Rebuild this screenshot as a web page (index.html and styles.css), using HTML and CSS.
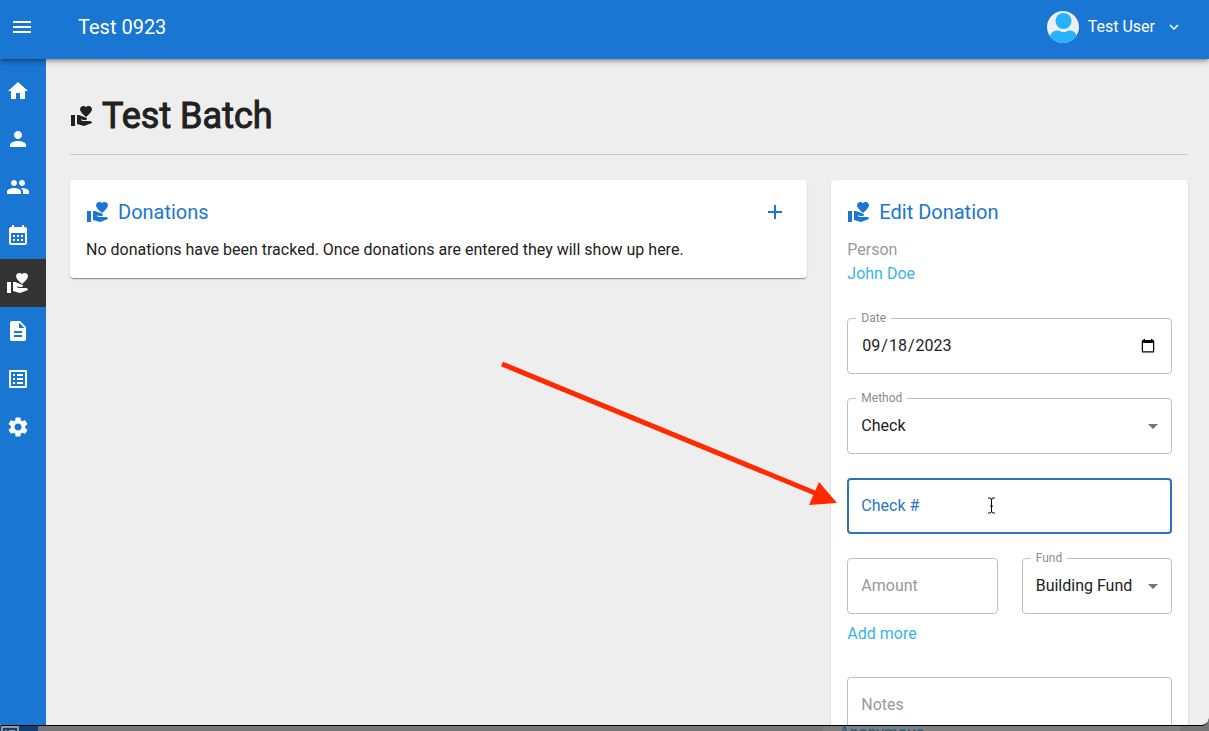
FILE: index.html
```
<!DOCTYPE html>
<html lang="en">
<head>
<meta charset="utf-8">
<title>Test Batch</title>
<link rel="stylesheet" href="styles.css">
</head>
<body>
<svg class="sprite" aria-hidden="true">
  <symbol id="giving" viewBox="0 0 24 24"><path d="M1 11h4v11H1zm15-7.75C16.65 2.49 17.66 2 18.7 2 20.55 2 22 3.45 22 5.3c0 2.27-2.91 4.9-6 7.7-3.09-2.81-6-5.44-6-7.7C10 3.45 11.45 2 13.3 2c1.04 0 2.05.49 2.7 1.25zM20 17h-7l-2.09-.73.33-.94L13 16h2.82c.65 0 1.18-.53 1.18-1.18 0-.49-.31-.93-.77-1.11L8.97 11H7v9.02L14 22l8.01-3c-.01-1.1-.9-2-2.01-2z"/></symbol>
  <symbol id="list" viewBox="0 0 24 24"><path d="M19 5v14H5V5h14m1.1-2H3.9c-.5 0-.9.4-.9.9v16.2c0 .4.4.9.9.9h16.2c.4 0 .9-.5.9-.9V3.9c0-.5-.5-.9-.9-.9zM11 7h6v2h-6V7zm0 4h6v2h-6v-2zm0 4h6v2h-6zM7 7h2v2H7zm0 4h2v2H7zm0 4h2v2H7z"/></symbol>
</svg>

<div class="window">
  <header class="topbar">
    <button class="icon-button" type="button" aria-label="Menu">
      <svg class="icon" viewBox="0 0 24 24"><path d="M3 18h18v-2H3zm0-5h18v-2H3zm0-7v2h18V6z"/></svg>
    </button>
    <div class="site-name">Test 0923</div>
    <button class="user-menu" type="button">
      <svg class="avatar" viewBox="0 0 32 32" aria-hidden="true">
        <clipPath id="disc"><circle cx="16" cy="16" r="16"/></clipPath>
        <g clip-path="url(#disc)">
          <rect width="32" height="32" fill="#eeeeee"/>
          <circle cx="16.500" cy="10" r="8" fill="#25b2fb"/>
          <path d="M1 32c1-9 5-12.500 9-12.500 3 0 3 1.500 6.500 1.500s3.500-1.500 6.500-1.500c4 0 8 3.500 8.500 12.500z" fill="#25b2fb"/>
        </g>
      </svg>
      <span>Test User</span>
      <svg class="chevron" viewBox="0 0 24 24" aria-hidden="true"><path d="M7.410 8.590 12 13.170l4.590-4.580L18 10l-6 6-6-6z"/></svg>
    </button>
  </header>

  <div class="body">
    <nav class="sidebar" aria-label="Main">
      <a href="#home" aria-label="Home"><svg class="icon" viewBox="0 0 24 24"><path d="M10 20v-6h4v6h5v-8h3L12 3 2 12h3v8z"/></svg></a>
      <a href="#person" aria-label="Person"><svg class="icon" viewBox="0 0 24 24"><path d="M12 12c2.21 0 4-1.79 4-4s-1.79-4-4-4-4 1.79-4 4 1.79 4 4 4m0 2c-2.67 0-8 1.34-8 4v2h16v-2c0-2.66-5.33-4-8-4"/></svg></a>
      <a href="#groups" aria-label="Groups"><svg class="icon" viewBox="0 0 24 24"><path d="M16 11c1.660 0 2.990-1.340 2.990-3S17.660 5 16 5s-3 1.340-3 3 1.340 3 3 3m-8 0c1.660 0 2.990-1.340 2.990-3S9.660 5 8 5 5 6.340 5 8s1.340 3 3 3m0 2c-2.330 0-7 1.170-7 3.500V19h14v-2.500c0-2.330-4.670-3.500-7-3.500m8 0c-.29 0-.62.02-.97.05 1.160.84 1.970 1.970 1.970 3.450V19h6v-2.500c0-2.330-4.670-3.500-7-3.500"/></svg></a>
      <a href="#calendar" aria-label="Calendar"><svg class="icon" viewBox="0 0 24 24"><path d="M19 4h-1V2h-2v2H8V2H6v2H5c-1.110 0-1.990.9-1.990 2L3 20c0 1.100.89 2 2 2h14c1.100 0 2-.9 2-2V6c0-1.100-.9-2-2-2zm0 16H5V10h14v10zM9 14H7v-2h2v2zm4 0h-2v-2h2v2zm4 0h-2v-2h2v2zm-8 4H7v-2h2v2zm4 0h-2v-2h2v2zm4 0h-2v-2h2v2z"/></svg></a>
      <a class="current" href="#donations" aria-label="Donations"><svg class="icon"><use href="#giving"/></svg></a>
      <a href="#forms" aria-label="Forms"><svg class="icon" viewBox="0 0 24 24"><path d="M14 2H6c-1.100 0-1.990.9-1.990 2L4 20c0 1.100.89 2 1.990 2H18c1.100 0 2-.9 2-2V8zm2 16H8v-2h8zm0-4H8v-2h8zm-3-5V3.500L18.500 9z"/></svg></a>
      <a href="#tasks" aria-label="Tasks"><svg class="icon"><use href="#list"/></svg></a>
      <a href="#settings" aria-label="Settings"><svg class="icon" viewBox="0 0 24 24"><path d="M19.140 12.940c.04-.3.06-.61.06-.94 0-.32-.02-.64-.07-.94l2.030-1.580c.18-.14.23-.41.12-.61l-1.920-3.320c-.12-.22-.37-.29-.59-.22l-2.390.96c-.5-.38-1.030-.7-1.620-.94l-.36-2.540c-.04-.24-.24-.41-.48-.41h-3.840c-.24 0-.43.17-.47.41l-.36 2.540c-.59.24-1.130.57-1.620.94l-2.390-.96c-.22-.08-.47 0-.59.22L2.740 8.870c-.12.21-.08.47.12.61l2.030 1.580c-.05.3-.09.63-.09.94s.02.64.07.94l-2.030 1.580c-.18.14-.23.41-.12.61l1.920 3.320c.12.22.37.29.59.22l2.390-.96c.5.38 1.030.7 1.620.94l.36 2.540c.05.24.24.41.48.41h3.840c.24 0 .44-.17.47-.41l.36-2.540c.59-.24 1.130-.56 1.620-.94l2.390.96c.22.08.47 0 .59-.22l1.920-3.320c.12-.22.07-.47-.12-.61zM12 15.600c-1.980 0-3.600-1.620-3.600-3.600s1.620-3.600 3.600-3.600 3.600 1.620 3.600 3.600-1.620 3.600-3.600 3.600"/></svg></a>
    </nav>

    <main class="content">
      <h1 class="page-title"><svg class="icon" aria-hidden="true"><use href="#giving"/></svg><span>Test Batch</span></h1>

      <div class="columns">
        <section class="card wide">
          <div class="card-head">
            <svg class="icon" aria-hidden="true"><use href="#giving"/></svg>
            <h2>Donations</h2>
            <button class="icon-button add" type="button" aria-label="Add donation">
              <svg class="icon" viewBox="0 0 24 24"><path d="M19 13h-6v6h-2v-6H5v-2h6V5h2v6h6z"/></svg>
            </button>
          </div>
          <p>No donations have been tracked. Once donations are entered they will show up here.</p>
        </section>

        <form class="card">
          <div class="card-head">
            <svg class="icon" aria-hidden="true"><use href="#giving"/></svg>
            <h2>Edit Donation</h2>
          </div>
          <div class="muted">Person</div>
          <a class="link" href="#person">John Doe</a>

          <div class="fields">
            <div class="field">
              <label class="notch" for="date">Date</label>
              <input id="date" type="date" value="2023-09-18">
            </div>
            <div class="field">
              <label class="notch" for="method">Method</label>
              <select id="method"><option>Check</option></select>
              <svg class="caret" viewBox="0 0 24 24" aria-hidden="true"><path d="m7 10 5 5 5-5z"/></svg>
            </div>
            <div class="field active">
              <label class="inside" for="check">Check #</label>
              <input id="check" type="text">
              <svg class="text-cursor" viewBox="0 0 9 17" aria-hidden="true"><path d="M1 1h1.500q2 0 2 2v11q0 2-2 2H1M8 1H6.500q-2 0-2 2v11q0 2 2 2H8M3 9h3" fill="none" stroke="#000"/></svg>
            </div>
            <div class="pair">
              <div class="field">
                <label class="inside" for="amount">Amount</label>
                <input id="amount" type="text">
              </div>
              <div class="field">
                <label class="notch" for="fund">Fund</label>
                <select id="fund"><option>Building Fund</option></select>
                <svg class="caret" viewBox="0 0 24 24" aria-hidden="true"><path d="m7 10 5 5 5-5z"/></svg>
              </div>
            </div>
          </div>
          <a class="link more" href="#more">Add more</a>
          <div class="field notes">
            <label class="inside" for="notes">Notes</label>
            <textarea id="notes"></textarea>
          </div>
        </form>
      </div>
    </main>
  </div>
</div>

<div class="behind">
  <div class="behind-nav"><svg class="icon"><use href="#list"/></svg></div>
  <div class="behind-panel">Anonymous</div>
</div>

<svg class="pointer" viewBox="0 0 337 144" aria-hidden="true">
  <path d="M2 3 315 132" stroke="#ff2a00" stroke-width="5"/>
  <path d="M319 121 337 142 309 144z" fill="#ff2a00"/>
</svg>
</body>
</html>
```
FILE: styles.css
```
* { box-sizing: border-box; }

body {
  margin: 0;
  height: 100vh;
  display: flex;
  flex-direction: column;
  overflow: hidden;
  background: #777;
  color: #212121;
  font: 16px/24px Roboto, "Liberation Sans", sans-serif;
}

h1, h2, p { margin: 0; font-weight: 400; }
a { text-decoration: none; }
button, input, select, textarea { font: inherit; color: inherit; }
.sprite { display: none; }
.icon { display: block; flex: none; width: 24px; height: 24px; fill: currentColor; }

.window {
  flex: 1;
  min-height: 0;
  display: flex;
  flex-direction: column;
  overflow: hidden;
  background: #eee;
  border-bottom: 1px solid #000;
  border-radius: 0 0 8px 2px;
}

.topbar {
  flex: none;
  z-index: 1;
  display: flex;
  align-items: center;
  height: 59px;
  padding: 0 26px 5px 10px;
  background: #1976d2;
  color: #fff;
  box-shadow: 0 2px 4px -1px rgba(0, 0, 0, .4), 0 4px 6px rgba(0, 0, 0, .14);
}

.icon-button, .user-menu { padding: 0; border: 0; background: none; cursor: pointer; }
.site-name { margin-left: 44px; font-size: 20px; }
.user-menu { display: flex; align-items: center; margin-left: auto; }
.avatar { width: 32px; height: 32px; margin-right: 9px; }
.chevron { width: 18px; height: 18px; margin-left: 10px; fill: currentColor; }

.body { flex: 1; min-height: 0; display: flex; }

.sidebar { flex: none; width: 46px; padding-top: 8px; background: #1976d2; }
.sidebar a { display: flex; align-items: center; height: 48px; padding-left: 6px; color: #fff; }
.sidebar .current { background: #333; }

.content { flex: 1; min-width: 0; padding: 32px 21px 0 24px; }

.page-title {
  display: flex;
  align-items: center;
  gap: 8px;
  height: 64px;
  padding-bottom: 14px;
  border-bottom: 1px solid #c8c8c8;
  font-size: 36px;
  line-height: 48px;
  -webkit-text-stroke: 1px currentColor;
}

.columns {
  display: grid;
  grid-template-columns: repeat(3, 1fr);
  gap: 24px;
  align-items: start;
  margin-top: 25px;
}

.card {
  padding: 16px;
  background: #fff;
  border-radius: 4px;
  box-shadow: 0 2px 1px -1px rgba(0, 0, 0, .3), 0 1px 2px rgba(0, 0, 0, .2);
}
.wide { grid-column: span 2; }

.card-head { display: flex; align-items: center; gap: 8px; height: 32px; margin-bottom: 10px; color: #1976d2; }
.card-head h2 { font-size: 20px; }
.add { margin: 0 4px 0 auto; }

.muted { color: #999; }
.link { display: block; color: #35b4ea; }
.more { margin-top: 8px; }

.fields { display: grid; gap: 24px; margin-top: 32px; }
.pair { display: grid; grid-template-columns: 1fr 1fr; gap: 24px; }

.field { position: relative; display: flex; min-width: 0; height: 56px; }
.field input, .field select, .field textarea {
  width: 100%;
  min-width: 0;
  margin: 0;
  padding: 0 13px;
  border: 1px solid #c0c0c0;
  border-radius: 4px;
  background: transparent;
  appearance: none;
  outline: 0;
  resize: none;
}
.field.active input { border: 2px solid #2a74b9; }

.notch { position: absolute; top: -8px; left: 9px; padding: 0 5px; background: #fff; color: #8c8c8c; font-size: 12px; line-height: 16px; }
.inside { position: absolute; top: 16px; left: 14px; color: #999; }
.active .inside { color: #2a76c6; }
.caret { position: absolute; top: 16px; right: 7px; width: 24px; height: 24px; fill: #757575; pointer-events: none; }
.text-cursor { position: absolute; top: 19px; left: 140px; width: 9px; height: 17px; }

.notes { height: 120px; margin-top: 31px; }

.behind { flex: none; display: flex; height: 5px; overflow: hidden; background: #757575; }
.behind-nav { width: 38px; background: #103f70; color: #999; }
.behind-nav .icon { margin: -3px 0 0 -2px; }
.behind-panel { width: 357px; margin: 0 29px 0 auto; padding-left: 16px; background: #7f7f7f; color: #1d5f83; line-height: 14px; }

.pointer { position: absolute; top: 361px; left: 500px; width: 337px; height: 144px; pointer-events: none; }
```
